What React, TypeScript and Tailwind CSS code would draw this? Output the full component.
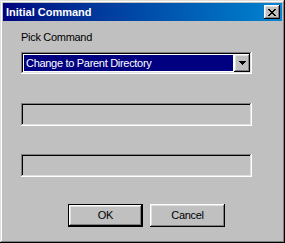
const FONT = "font-['Liberation_Sans',Arial,sans-serif]"

const raised =
  'shadow-[inset_-1px_-1px_#000,inset_1px_1px_#fff,inset_-2px_-2px_#808080,inset_2px_2px_#dfdfdf]'
const sunken =
  'shadow-[inset_-1px_-1px_#fff,inset_1px_1px_#808080,inset_-2px_-2px_#dfdfdf,inset_2px_2px_#000]'

function CloseGlyph() {
  const rows = ['11000011', '01100110', '00111100', '00011000', '00111100', '01100110', '11000011']
  return (
    <svg width="8" height="7" viewBox="0 0 8 7" shapeRendering="crispEdges">
      {rows.flatMap((row, y) =>
        row.split('').map((c, x) => (c === '1' ? <rect key={`${x}-${y}`} x={x} y={y} width="1" height="1" fill="#000" /> : null)),
      )}
    </svg>
  )
}

function DownArrow() {
  return (
    <svg width="7" height="4" viewBox="0 0 7 4" shapeRendering="crispEdges">
      <rect x="0" y="0" width="7" height="1" fill="#000" />
      <rect x="1" y="1" width="5" height="1" fill="#000" />
      <rect x="2" y="2" width="3" height="1" fill="#000" />
      <rect x="3" y="3" width="1" height="1" fill="#000" />
    </svg>
  )
}

export default function App() {
  return (
    <div
      className={`${FONT} flex h-[243px] w-[285px] flex-col bg-[#c0c0c0] p-[3px] text-[11px] text-black shadow-[inset_-1px_-1px_#000,inset_1px_1px_#dfdfdf,inset_-2px_-2px_#808080,inset_2px_2px_#fff]`}
    >
      {/* title bar */}
      <div className="flex h-[18px] shrink-0 items-center bg-gradient-to-r from-[#000080] to-[#1084d0] pl-[3px] pr-[2px]">
        <span className="flex-1 text-[11px] leading-[18px] font-bold text-white">Initial Command</span>
        <button type="button" className={`flex h-[14px] w-[16px] items-center justify-center bg-[#c0c0c0] ${raised}`}>
          <CloseGlyph />
        </button>
      </div>

      <div className="ml-[18px] flex flex-col tracking-[-0.3px]">
        <label className="mt-[10px] leading-[13px]">Pick Command</label>

        {/* combo */}
        <div className={`mt-[8px] flex h-[22px] w-[231px] bg-white p-[2px] ${sunken}`}>
          <div className="flex flex-1 p-[1px]">
            <div className="flex-1 bg-[#000080] pl-[2px] leading-[16px] text-white">Change to Parent Directory</div>
          </div>
          <div className={`flex h-[18px] w-[16px] items-center justify-center bg-[#c0c0c0] ${raised}`}>
            <DownArrow />
          </div>
        </div>

        <div className={`mt-[29px] h-[23px] w-[231px] bg-[#c0c0c0] ${sunken}`} />
        <div className={`mt-[28px] h-[23px] w-[231px] bg-[#c0c0c0] ${sunken}`} />

        <div className="mt-[27px] ml-[47px] flex gap-[7px]">
          <button type="button" className="h-[23px] w-[75px] border border-black bg-[#c0c0c0]">
            <span className={`flex h-full w-full items-center justify-center ${raised}`}>OK</span>
          </button>
          <button type="button" className={`flex h-[23px] w-[75px] items-center justify-center bg-[#c0c0c0] ${raised}`}>
            Cancel
          </button>
        </div>
      </div>
    </div>
  )
}
